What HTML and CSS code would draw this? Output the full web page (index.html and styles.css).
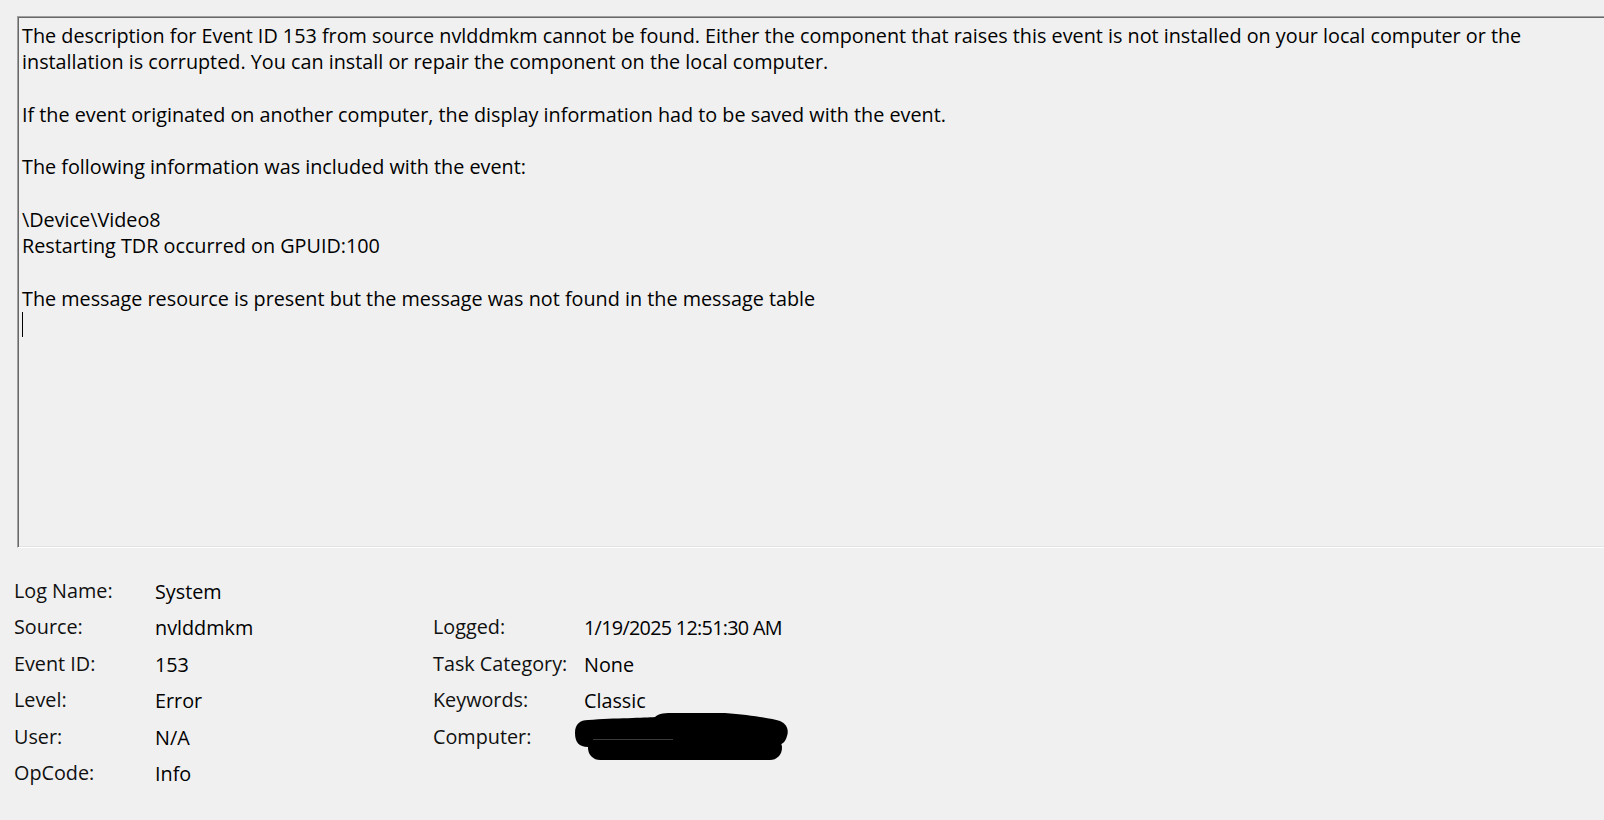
FILE: index.html
```html
<!DOCTYPE html>
<html>
<head>
<meta charset="utf-8">
<link rel="stylesheet" href="styles.css">
</head>
<body>
<div class="desc">
  <div class="desc-text">The description for Event ID 153 from source nvlddmkm cannot be found. Either the component that raises this event is not installed on your local computer or the<br>installation is corrupted. You can install or repair the component on the local computer.<br><br>If the event originated on another computer, the display information had to be saved with the event.<br><br>The following information was included with the event:<br><br>\Device\Video8<br>Restarting TDR occurred on GPUID:100<br><br>The message resource is present but the message was not found in the message table</div>
  <div class="caret"></div>
</div>
<div class="details">
  <div class="label">Log Name:</div><div class="value">System</div><div class="label"></div><div class="value"></div>
  <div class="label">Source:</div><div class="value">nvlddmkm</div><div class="label">Logged:</div><div class="value date">1/19/2025 12:51:30 AM</div>
  <div class="label">Event ID:</div><div class="value">153</div><div class="label">Task Category:</div><div class="value">None</div>
  <div class="label">Level:</div><div class="value">Error</div><div class="label">Keywords:</div><div class="value">Classic</div>
  <div class="label">User:</div><div class="value">N/A</div><div class="label">Computer:</div><div class="value redacted-cell"><svg class="redaction" width="216" height="50" viewBox="0 0 216 50"><path d="M13,8 C40,6 70,6 80,5 C84,1 90,1 100,1 L150,1 C175,3 195,6 205,9 C212,12 214,18 212,24 C210,32 205,34 195,34 L13,35 C4,35 0,30 0,21 C0,12 5,8 13,8 Z" fill="#000"/><rect x="13" y="24" width="194" height="24" rx="12" fill="#000"/><line x1="18" y1="27.5" x2="98" y2="27.5" stroke="#3a3a3a" stroke-width="1"/></svg></div>
  <div class="label">OpCode:</div><div class="value">Info</div><div class="label"></div><div class="value"></div>
</div>
</body>
</html>
```
FILE: styles.css
```css
html, body {
  margin: 0;
  padding: 0;
  background: #f0f0f0;
  overflow: hidden;
}

body {
  width: 1604px;
  height: 820px;
  font-family: "Open Sans", "Noto Sans", sans-serif;
  font-size: 19.8px;
  color: #000;
}

.desc {
  margin: 16px -20px 0 17px;
  height: 524px;
  border-style: solid;
  border-width: 1px;
  border-color: #a0a0a0 #ffffff #ffffff #a0a0a0;
  box-shadow: inset 1px 1px 0 #696969, inset -1px -1px 0 #e3e3e3;
  padding: 6px 0 0 4px;
  box-sizing: content-box;
  line-height: 26.3px;
}

.desc-text {
  white-space: nowrap;
}

.caret {
  width: 1px;
  height: 25px;
  background: #000;
}

.details {
  display: grid;
  grid-template-columns: 141px 278px 151px 300px;
  grid-auto-rows: 36.4px;
  margin-top: 29px;
  padding-left: 14px;
  line-height: 27px;
  color: #000;
}

.label {
  color: #101010;
}

.value {
  padding-top: 1px;
}

.date {
  letter-spacing: -0.7px;
}

.redacted-cell {
  position: relative;
}

.redaction {
  position: absolute;
  left: -9px;
  top: -11px;
}
```
